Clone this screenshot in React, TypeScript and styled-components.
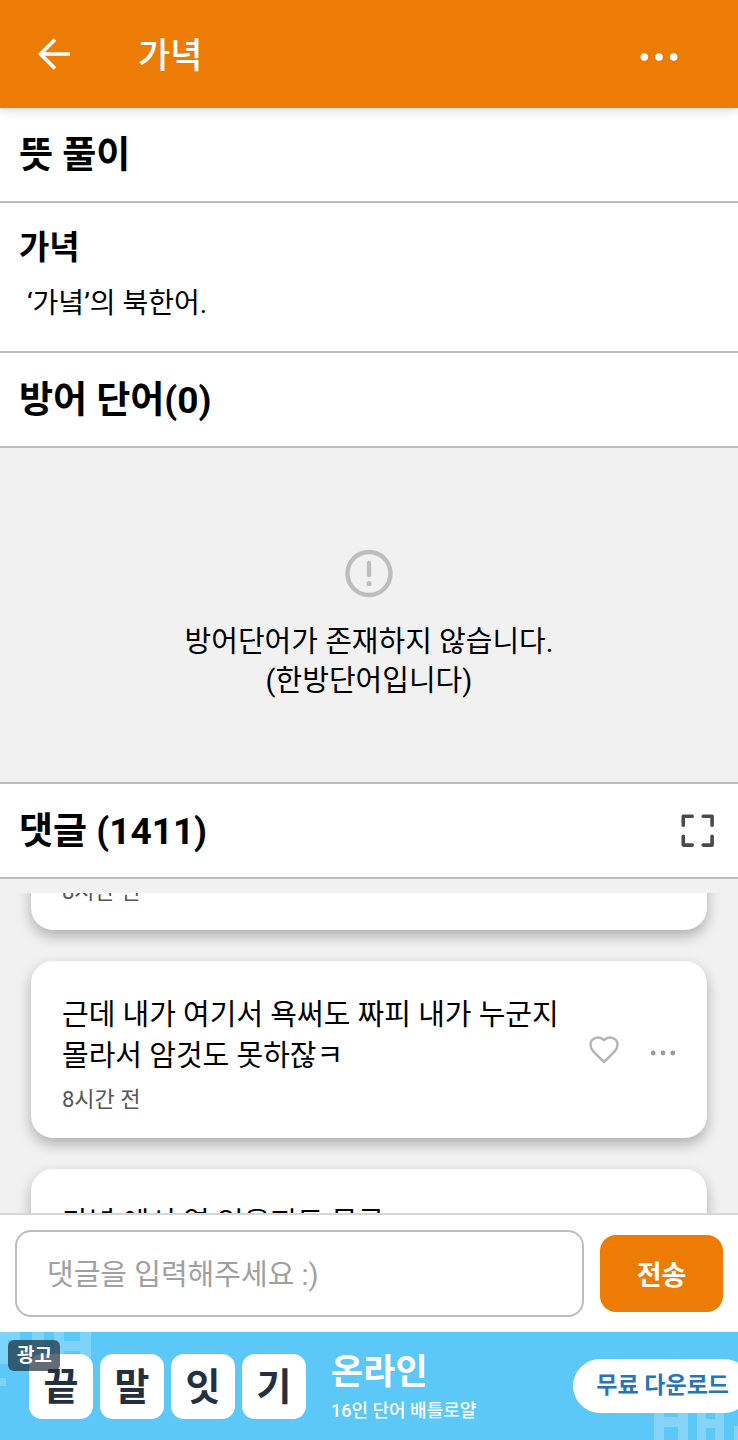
import React, { useLayoutEffect, useRef } from 'react';
import styled, { createGlobalStyle } from 'styled-components';

const ORANGE = '#ec7c05';
const LINE = '#bdbdbd';
const GRAY_BG = '#f1f1f1';

const GlobalStyle = createGlobalStyle`
  * { box-sizing: border-box; }
  html, body, #root { height: 100%; }
  body { margin: 0; background: #fff; color: #000; font-family: Roboto, 'Noto Sans CJK KR', sans-serif; }
  h1, h2, h3, p, ul { margin: 0; padding: 0; }
  button, input { font-family: inherit; }
`;

const Screen = styled.div`
  display: flex;
  flex-direction: column;
  height: 100%;
  min-width: 0;
`;

const AppBar = styled.header`
  flex: none;
  display: flex;
  align-items: center;
  height: 108px;
  padding: 0 51px 0 30px;
  background: ${ORANGE};
  color: #fff;
  box-shadow: 0 2px 10px rgba(0, 0, 0, 0.16);
  z-index: 1;
`;

const IconButton = styled.button<{ $size: number }>`
  flex: none;
  display: flex;
  align-items: center;
  justify-content: center;
  width: ${(p) => p.$size}px;
  height: ${(p) => p.$size}px;
  padding: 0;
  border: 0;
  background: none;
  color: inherit;
`;

const AppTitle = styled.h1`
  flex: 1;
  padding: 6px 0 0 60px;
  font-size: 35px;
  font-weight: 500;
  line-height: 48px;
`;

const SectionHead = styled.div`
  flex: none;
  display: flex;
  align-items: center;
  justify-content: space-between;
  height: 95px;
  padding: 0 16px 0 19px;
  border-bottom: 2px solid ${LINE};
`;

const SectionTitle = styled.h2`
  padding-top: 2px;
  font-size: 37px;
  font-weight: 700;
  line-height: 48px;
`;

const Meaning = styled.section`
  flex: none;
  padding: 21px 19px 27px;
  border-bottom: 2px solid ${LINE};
`;

const Word = styled.h3`
  font-size: 33px;
  font-weight: 700;
  line-height: 48px;
`;

const Definition = styled.p`
  padding: 11px 8px 0;
  font-size: 28px;
  line-height: 41px;
`;

const Empty = styled.section`
  flex: none;
  display: flex;
  flex-direction: column;
  align-items: center;
  padding: 98px 20px 81px;
  background: ${GRAY_BG};
  border-bottom: 2px solid ${LINE};
  font-size: 29px;
  line-height: 39px;
  text-align: center;
  color: #000;
  svg { margin-bottom: 21px; }
`;

const CommentArea = styled.section`
  flex: 1;
  min-height: 0;
  display: flex;
  padding-top: 14px;
  background: ${GRAY_BG};
`;

const CommentList = styled.ul`
  flex: 1;
  overflow-y: auto;
  scrollbar-width: none;
  padding: 0 31px;
  list-style: none;
`;

const Card = styled.li`
  display: flex;
  align-items: center;
  margin-bottom: 31px;
  padding: 0 20px 0 31px;
  border-radius: 22px;
  background: #fff;
  box-shadow: 0 6px 14px rgba(0, 0, 0, 0.28);
`;

const CardBody = styled.div`
  flex: 1;
  min-width: 0;
  padding: 34px 0 20px;
`;

const CommentText = styled.p`
  font-size: 29px;
  line-height: 41px;
`;

const CommentTime = styled.p`
  padding-top: 5px;
  font-size: 22px;
  line-height: 36px;
  color: #555;
`;

const CardActions = styled.div`
  display: flex;
  align-items: center;
  gap: 11px;
  color: #999;
`;

const Composer = styled.form`
  flex: none;
  display: flex;
  align-items: center;
  gap: 16px;
  padding: 15px;
  border-top: 2px solid #d6d6d6;
  background: #fff;
`;

const CommentInput = styled.input`
  flex: 1;
  min-width: 0;
  height: 87px;
  padding: 2px 30px 0;
  border: 2px solid ${LINE};
  border-radius: 16px;
  background: #fff;
  font-size: 29px;
  color: #000;
  outline: 0;
  &::placeholder { color: #a0a0a0; opacity: 1; }
`;

const SendButton = styled.button`
  flex: none;
  width: 123px;
  height: 77px;
  padding: 0;
  border: 0;
  border-radius: 16px;
  background: ${ORANGE};
  color: #fff;
  font-size: 27px;
  font-weight: 700;
`;

const Ad = styled.aside`
  position: relative;
  flex: none;
  display: flex;
  align-items: center;
  height: 108px;
  padding-left: 29px;
  overflow: hidden;
  background: #5cc8f7;
`;

const AdPattern = styled.svg<{ $right?: boolean }>`
  position: absolute;
  ${(p) => (p.$right ? 'right: 0; bottom: 0;' : 'left: 0; top: 0;')}
`;

const AdBadge = styled.span`
  position: absolute;
  left: 8px;
  top: 8px;
  z-index: 1;
  padding: 1px 8px 0 9px;
  border-radius: 6px;
  background: rgba(30, 45, 58, 0.7);
  color: #fff;
  font-size: 19px;
  font-weight: 700;
  line-height: 30px;
`;

const Tiles = styled.div`
  position: relative;
  flex: none;
  display: flex;
  gap: 7px;
`;

const Tile = styled.span`
  width: 64px;
  height: 65px;
  padding-top: 2px;
  border-radius: 13px;
  background: #fff;
  color: #243040;
  font-size: 38px;
  font-weight: 700;
  line-height: 63px;
  text-align: center;
`;

const AdCopy = styled.div`
  flex: 1;
  padding: 3px 0 0 25px;
  color: #fff;
  white-space: nowrap;
`;

const AdTitle = styled.p`
  font-size: 35px;
  font-weight: 700;
  line-height: 46px;
`;

const AdSub = styled.p`
  font-size: 18px;
  font-weight: 500;
  line-height: 30px;
`;

const AdLink = styled.a`
  position: relative;
  flex: none;
  height: 54px;
  padding: 0 22px 0 23px;
  margin-right: -13px;
  border-radius: 27px;
  background: #fff;
  color: #2676b5;
  font-size: 23px;
  font-weight: 700;
  line-height: 54px;
  text-decoration: none;
`;

const BackIcon = () => (
  <svg width="48" height="48" viewBox="0 0 48 48" fill="none" stroke="currentColor" strokeWidth="3.6">
    <path d="M40 24H11M25 9.5L10.5 24L25 38.5" />
  </svg>
);

const DotsIcon = ({ width, r, gap }: { width: number; r: number; gap: number }) => (
  <svg width={width} height="24" viewBox={`${-width / 2} -15 ${width} 24`} fill="currentColor">
    <circle cx={-gap} cy="0" r={r} />
    <circle cx="0" cy="0" r={r} />
    <circle cx={gap} cy="0" r={r} />
  </svg>
);

const AlertIcon = () => (
  <svg width="56" height="56" viewBox="0 0 56 56" fill="none" stroke="#bdbdbd" strokeWidth="4.4">
    <circle cx="28" cy="27.5" r="21.5" />
    <path d="M28 17V29" strokeLinecap="round" />
    <circle cx="28" cy="37.5" r="2.6" fill="#bdbdbd" stroke="none" />
  </svg>
);

const ExpandIcon = () => (
  <svg width="44" height="44" viewBox="0 0 44 44" fill="none" stroke="#4a4a4a" strokeWidth="3.6" strokeLinecap="round" strokeLinejoin="round">
    <path d="M7.300 16.200V7.300H16.200M27.200 7.300H36.100V16.200M36.100 27.200V36.100H27.200M16.200 36.100H7.300V27.200" />
  </svg>
);

const HeartIcon = () => (
  <svg width="32" height="32" viewBox="0 0 32 32" fill="none" stroke="#b5b5b5" strokeWidth="2.5" strokeLinejoin="round">
    <path d="M16 28L5.500 17.600C1.800 14 1.600 8.500 4.500 5.700C7.700 2.600 12.800 2.800 16 6.200C19.200 2.800 24.300 2.600 27.500 5.700C30.400 8.500 30.200 14 26.500 17.600Z" />
  </svg>
);

type Comment = { id: number; text?: string; time: string };

const comments: Comment[] = [
  { id: 1, time: '8시간 전' },
  { id: 2, text: '근데 내가 여기서 욕써도 짜피 내가 누군지 몰라서 암것도 못하잖ㅋ', time: '8시간 전' },
  { id: 3, text: '가녁 에서 역 있을지도 몰름', time: '8시간 전' },
];

const tiles = ['끝', '말', '잇', '기'];

export default function App() {
  const listRef = useRef<HTMLUListElement>(null);

  useLayoutEffect(() => {
    if (listRef.current) listRef.current.scrollTop = 58;
  }, []);

  return (
    <>
      <GlobalStyle />
      <Screen>
        <AppBar>
          <IconButton $size={48} type="button" aria-label="뒤로"><BackIcon /></IconButton>
          <AppTitle>가녁</AppTitle>
          <IconButton $size={56} type="button" aria-label="더보기"><DotsIcon width={44} r={3.8} gap={14.7} /></IconButton>
        </AppBar>

        <SectionHead><SectionTitle>뜻 풀이</SectionTitle></SectionHead>
        <Meaning>
          <Word>가녁</Word>
          <Definition>‘가녘’의 북한어.</Definition>
        </Meaning>

        <SectionHead><SectionTitle>방어 단어(0)</SectionTitle></SectionHead>
        <Empty>
          <AlertIcon />
          <p>방어단어가 존재하지 않습니다.</p>
          <p>(한방단어입니다)</p>
        </Empty>

        <SectionHead>
          <SectionTitle>댓글 (1411)</SectionTitle>
          <IconButton $size={48} type="button" aria-label="전체 화면"><ExpandIcon /></IconButton>
        </SectionHead>
        <CommentArea>
          <CommentList ref={listRef}>
            {comments.map((c) => (
              <Card key={c.id}>
                <CardBody>
                  {c.text && <CommentText>{c.text}</CommentText>}
                  <CommentTime>{c.time}</CommentTime>
                </CardBody>
                {c.text && (
                  <CardActions>
                    <IconButton $size={48} type="button" aria-label="좋아요"><HeartIcon /></IconButton>
                    <IconButton $size={48} type="button" aria-label="더보기"><DotsIcon width={30} r={2.4} gap={9.8} /></IconButton>
                  </CardActions>
                )}
              </Card>
            ))}
          </CommentList>
        </CommentArea>

        <Composer onSubmit={(e) => e.preventDefault()}>
          <CommentInput type="text" aria-label="댓글" placeholder="댓글을 입력해주세요 :)" />
          <SendButton type="submit">전송</SendButton>
        </Composer>

        <Ad>
          <AdPattern width="96" height="60" viewBox="0 0 96 60" fill="#7dd3f9" aria-hidden="true">
            <path d="M0 0H20V8H8V32H0ZM32 0H44V40H32ZM54 0H64V9H80V0H91V30H80V19H64V30H54ZM0 46H6V54H0Z" />
          </AdPattern>
          <AdPattern $right width="84" height="28" viewBox="0 0 84 28" fill="#85d4f8" aria-hidden="true">
            <path d="M0 0H10V5H24V0H34V28H24V15H10V28H0ZM43 0H52V7H61V0H70V28H61V16H52V28H43ZM80 14H84V28H80Z" />
          </AdPattern>
          <AdBadge>광고</AdBadge>
          <Tiles>
            {tiles.map((t) => <Tile key={t}>{t}</Tile>)}
          </Tiles>
          <AdCopy>
            <AdTitle>온라인</AdTitle>
            <AdSub>16인 단어 배틀로얄</AdSub>
          </AdCopy>
          <AdLink href="#download">무료 다운로드</AdLink>
        </Ad>
      </Screen>
    </>
  );
}
